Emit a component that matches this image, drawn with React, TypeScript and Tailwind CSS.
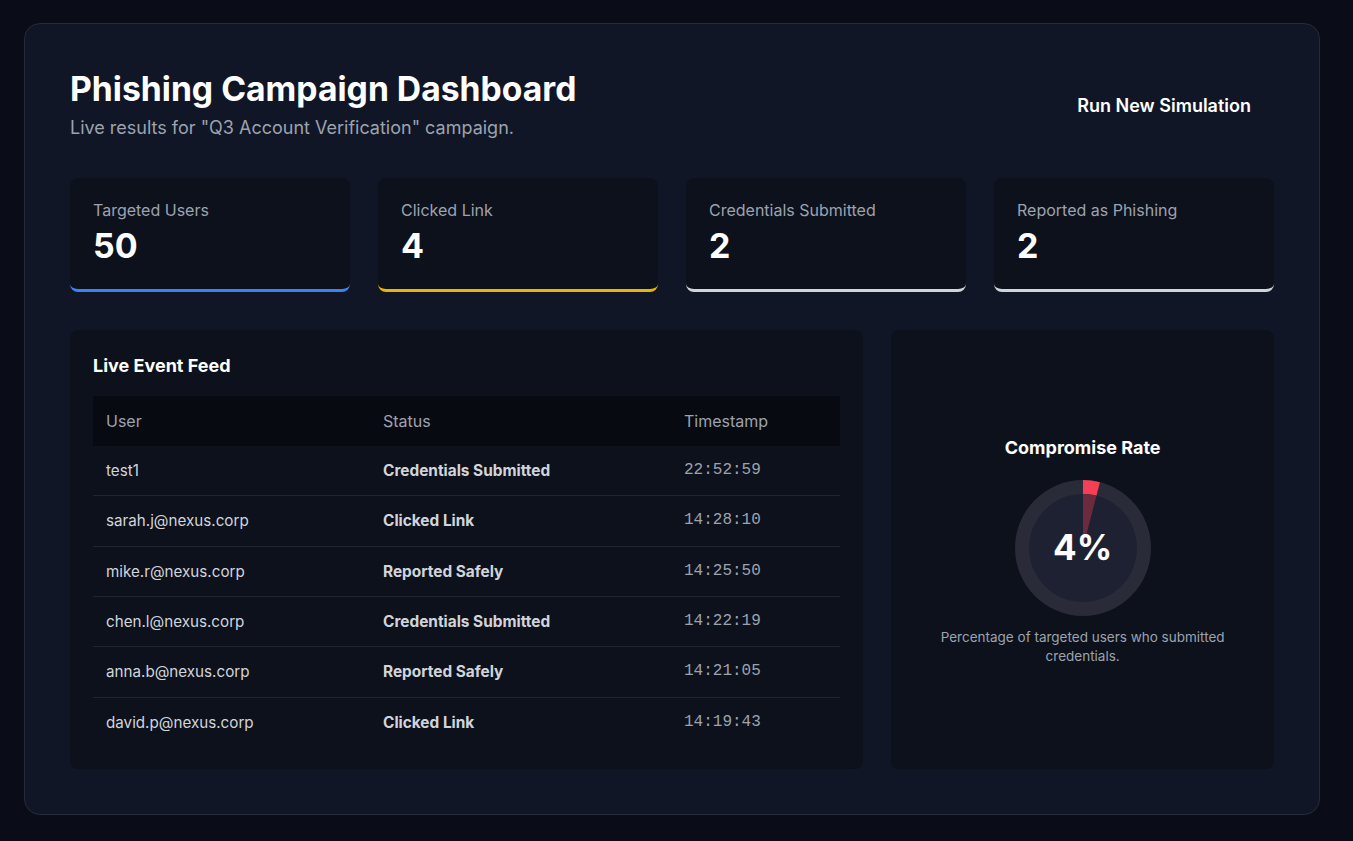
import React from "react";

const stats = [
  { label: "Targeted Users", value: "50", border: "border-b-[#3b82f6]" },
  { label: "Clicked Link", value: "4", border: "border-b-[#eab308]" },
  { label: "Credentials Submitted", value: "2", border: "border-b-[#d1d5db]" },
  { label: "Reported as Phishing", value: "2", border: "border-b-[#d1d5db]" },
];

const events = [
  { user: "test1", status: "Credentials Submitted", time: "22:52:59" },
  { user: "sarah.j@nexus.corp", status: "Clicked Link", time: "14:28:10" },
  { user: "mike.r@nexus.corp", status: "Reported Safely", time: "14:25:50" },
  { user: "chen.l@nexus.corp", status: "Credentials Submitted", time: "14:22:19" },
  { user: "anna.b@nexus.corp", status: "Reported Safely", time: "14:21:05" },
  { user: "david.p@nexus.corp", status: "Clicked Link", time: "14:19:43" },
];

function wedge(cx: number, cy: number, r: number, frac: number) {
  const a = frac * Math.PI * 2;
  const x = cx + r * Math.sin(a);
  const y = cy - r * Math.cos(a);
  const large = frac > 0.5 ? 1 : 0;
  return `M ${cx} ${cy} L ${cx} ${cy - r} A ${r} ${r} 0 ${large} 1 ${x} ${y} Z`;
}

function Donut() {
  const frac = 0.04;
  return (
    <div className="relative w-[136px] h-[136px]">
      <svg width="136" height="136" viewBox="0 0 136 136" className="absolute inset-0">
        <circle cx="68" cy="68" r="68" fill="#292c38" />
        <path d={wedge(68, 68, 68, frac)} fill="#f43f55" />
        <circle cx="68" cy="68" r="54" fill="#1e2131" />
        <path d={wedge(68, 68, 54, frac)} fill="#6b2a3e" />
      </svg>
      <div className="absolute inset-0 flex items-center justify-center text-[35px] font-bold text-white leading-none">
        4%
      </div>
    </div>
  );
}

export default function App() {
  return (
    <div className="min-h-[841px] w-full bg-[#0a0d17] pt-[23px] pl-6 font-['Inter',sans-serif]">
      <div className="w-[1296px] h-[792px] rounded-2xl border border-[#262b3a] bg-[#111626] px-[45px] pt-[45px]">
        <div className="flex items-center justify-between">
          <div>
            <h1 className="text-[33.7px] leading-[40px] font-bold text-white">Phishing Campaign Dashboard</h1>
            <p className="mt-[5px] text-[18px] leading-[27px] text-[#9ca3af]">
              Live results for "Q3 Account Verification" campaign.
            </p>
          </div>
          <button className="px-[23px] py-2 text-[18px] font-semibold text-white">Run New Simulation</button>
        </div>

        <div className="mt-[37px] grid grid-cols-4 gap-7">
          {stats.map((s) => (
            <div
              key={s.label}
              className={`h-[114px] rounded-lg border-b-[3px] ${s.border} bg-[#0d111c] px-[23px] pt-[20px]`}
            >
              <div className="text-[16px] leading-[24px] text-[#9ca3af]">{s.label}</div>
              <div className="mt-[4px] text-[34px] leading-[40px] font-bold text-white">{s.value}</div>
            </div>
          ))}
        </div>

        <div className="mt-[38px] grid grid-cols-3 gap-7">
          <div className="col-span-2 h-[439px] rounded-lg bg-[#0d111c] px-[23px] pt-[22px]">
            <h2 className="text-[18px] leading-[27px] font-bold text-white">Live Event Feed</h2>
            <table className="mt-[17px] w-full border-collapse text-left">
              <thead>
                <tr className="bg-[#080a12]">
                  <th className="px-[13px] py-[13px] text-[16px] leading-[24px] font-normal text-[#9ca3af] w-[277px]">User</th>
                  <th className="px-[13px] py-[13px] text-[16px] leading-[24px] font-normal text-[#9ca3af] w-[301px]">Status</th>
                  <th className="px-[13px] py-[13px] text-[16px] leading-[24px] font-normal text-[#9ca3af]">Timestamp</th>
                </tr>
              </thead>
              <tbody>
                {events.map((e, i) => (
                  <tr key={i} className={i < events.length - 1 ? "border-b border-[#1f2430]" : ""}>
                    <td className="px-[13px] py-[13px] text-[15.2px] leading-[23.33px] text-[#d1d5db]">{e.user}</td>
                    <td className="px-[13px] py-[13px] text-[15.4px] leading-[23.33px] font-bold text-[#d1d5db]">{e.status}</td>
                    <td className="px-[13px] py-[13px] text-[16px] leading-[23.33px] text-[#9ca3af] font-['Liberation_Mono',monospace]">{e.time}</td>
                  </tr>
                ))}
              </tbody>
            </table>
          </div>

          <div className="h-[439px] rounded-lg bg-[#0d111c] px-[23px] flex flex-col items-center justify-center">
            <h2 className="text-[18px] leading-[27px] font-bold text-white">Compromise Rate</h2>
            <div className="mt-[19px]">
              <Donut />
            </div>
            <p className="mt-[12px] text-center text-[13.5px] leading-[19px] text-[#9ca3af]">
              Percentage of targeted users who submitted credentials.
            </p>
          </div>
        </div>
      </div>
    </div>
  );
}
